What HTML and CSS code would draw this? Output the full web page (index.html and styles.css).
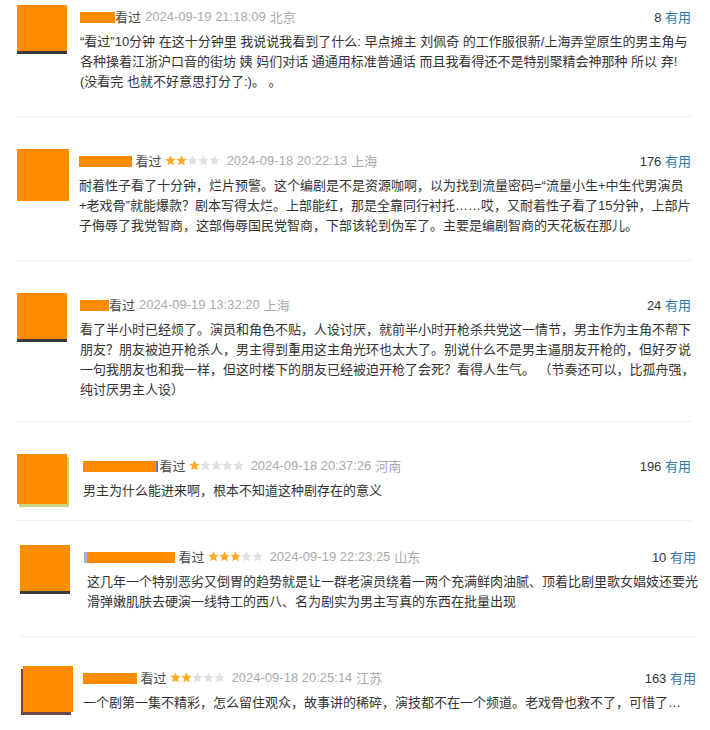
FILE: index.html
```html
<!DOCTYPE html>
<html lang="zh-CN">

<head>
  <meta charset="UTF-8">
  <meta name="viewport" content="width=device-width, initial-scale=1.0">
  <title>短评</title>
  <link rel="stylesheet" href="styles.css">
</head>

<body>
  <!-- star sprite -->
  <svg class="sprite" width="0" height="0">
    <defs>
      <polygon id="star" points="5.5,0.3 7.03,3.7 10.73,4.1 7.97,6.6 8.73,10.25 5.5,8.4 2.27,10.25 3.03,6.6 0.27,4.1 3.97,3.7" />
    </defs>
  </svg>

  <div class="comment-list">

    <div class="comment-item item-first">
      <div class="avatar avatar-dark"></div>
      <div class="comment">
        <h3 class="comment-info">
          <span class="user"><span class="mask" style="width:35px"></span>看过</span>
          <span class="comment-time">2024-09-19 21:18:09</span>
          <span class="comment-location">北京</span>
          <span class="votes"><span class="vote-count">8</span> <a href="#">有用</a></span>
        </h3>
        <p class="comment-content">“看过”10分钟 在这十分钟里 我说说我看到了什么: 早点摊主 刘佩奇 的工作服很新/上海弄堂原生的男主角与<br>各种操着江浙沪口音的街坊 姨 妈们对话 通通用标准普通话 而且我看得还不是特别聚精会神那种 所以 弃!<br>(没看完 也就不好意思打分了:)。 。</p>
      </div>
    </div>

    <div class="comment-item">
      <div class="avatar avatar-wide"></div>
      <div class="comment">
        <h3 class="comment-info">
          <span class="user"><span class="mask" style="width:53px"></span> 看过</span>
          <svg class="stars" width="55" height="11" viewBox="0 0 55 11">
            <use href="#star" class="on" x="0" /><use href="#star" class="on" x="11" /><use href="#star" x="22" /><use href="#star" x="33" /><use href="#star" x="44" />
          </svg>
          <span class="comment-time">2024-09-18 20:22:13</span>
          <span class="comment-location">上海</span>
          <span class="votes"><span class="vote-count">176</span> <a href="#">有用</a></span>
        </h3>
        <p class="comment-content">耐着性子看了十分钟，烂片预警。这个编剧是不是资源咖啊，以为找到流量密码=“流量小生+中生代男演员<br>+老戏骨”就能爆款？剧本写得太烂。上部能红，那是全靠同行衬托……哎，又耐着性子看了15分钟，上部片<br>子侮辱了我党智商，这部侮辱国民党智商，下部该轮到伪军了。主要是编剧智商的天花板在那儿。</p>
      </div>
    </div>

    <div class="comment-item item-tall">
      <div class="avatar avatar-dark"></div>
      <div class="comment">
        <h3 class="comment-info">
          <span class="user"><span class="mask" style="width:29px"></span>看过</span>
          <span class="comment-time">2024-09-19 13:32:20</span>
          <span class="comment-location">上海</span>
          <span class="votes"><span class="vote-count">24</span> <a href="#">有用</a></span>
        </h3>
        <p class="comment-content">看了半小时已经烦了。演员和角色不贴，人设讨厌，就前半小时开枪杀共党这一情节，男主作为主角不帮下<br>朋友？朋友被迫开枪杀人，男主得到重用这主角光环也太大了。别说什么不是男主逼朋友开枪的，但好歹说<br>一句我朋友也和我一样，但这时楼下的朋友已经被迫开枪了会死？看得人生气。 （节奏还可以，比孤舟强，<br>纯讨厌男主人设）</p>
      </div>
    </div>

    <div class="comment-item item-short">
      <div class="avatar avatar-green"></div>
      <div class="comment">
        <h3 class="comment-info">
          <span class="user"><span class="mask mask-tail" style="width:73px"></span> 看过</span>
          <svg class="stars" width="55" height="11" viewBox="0 0 55 11">
            <use href="#star" class="on" x="0" /><use href="#star" x="11" /><use href="#star" x="22" /><use href="#star" x="33" /><use href="#star" x="44" />
          </svg>
          <span class="comment-time">2024-09-18 20:37:26</span>
          <span class="comment-location">河南</span>
          <span class="votes"><span class="vote-count">196</span> <a href="#">有用</a></span>
        </h3>
        <p class="comment-content">男主为什么能进来啊，根本不知道这种剧存在的意义</p>
      </div>
    </div>

    <div class="comment-item item-inset">
      <div class="avatar avatar-dark"></div>
      <div class="comment">
        <h3 class="comment-info">
          <span class="user"><span class="mask mask-head" style="width:88px"></span> 看过</span>
          <svg class="stars" width="55" height="11" viewBox="0 0 55 11">
            <use href="#star" class="on" x="0" /><use href="#star" class="on" x="11" /><use href="#star" class="on" x="22" /><use href="#star" x="33" /><use href="#star" x="44" />
          </svg>
          <span class="comment-time">2024-09-19 22:23:25</span>
          <span class="comment-location">山东</span>
          <span class="votes"><span class="vote-count">10</span> <a href="#">有用</a></span>
        </h3>
        <p class="comment-content">这几年一个特别恶劣又倒胃的趋势就是让一群老演员绕着一两个充满鲜肉油腻、顶着比剧里歌女娼妓还要光<br>滑弹嫩肌肤去硬演一线特工的西八、名为剧实为男主写真的东西在批量出现</p>
      </div>
    </div>

    <div class="comment-item item-inset item-last">
      <div class="avatar avatar-photo"></div>
      <div class="comment">
        <h3 class="comment-info">
          <span class="user"><span class="mask" style="width:54px"></span> 看过</span>
          <svg class="stars" width="55" height="11" viewBox="0 0 55 11">
            <use href="#star" class="on" x="0" /><use href="#star" class="on" x="11" /><use href="#star" x="22" /><use href="#star" x="33" /><use href="#star" x="44" />
          </svg>
          <span class="comment-time">2024-09-18 20:25:14</span>
          <span class="comment-location">江苏</span>
          <span class="votes"><span class="vote-count">163</span> <a href="#">有用</a></span>
        </h3>
        <p class="comment-content">一个剧第一集不精彩，怎么留住观众，故事讲的稀碎，演技都不在一个频道。老戏骨也救不了，可惜了…</p>
      </div>
    </div>

  </div>
</body>

</html>
```

FILE: styles.css
```css
/* Base styles */
body {
  margin: 0;
  background: #fff;
  color: #333;
  font-family: "Liberation Sans", Arial, "Noto Sans CJK SC", sans-serif;
  font-size: 13px;
  overflow: hidden;
}

.sprite {
  position: absolute;
  width: 0;
  height: 0;
}

.comment-item {
  display: flex;
  align-items: flex-start;
  margin: 0 19px 0 17px;
  padding: 32px 0 24px;
  border-bottom: 1px solid #eee;
}

.item-first {
  padding-top: 5px;
}

.item-tall {
  padding-bottom: 21px;
}

.item-short {
  padding-bottom: 16px;
}

.item-inset {
  margin: 0 14px 0 20px;
  padding-top: 24px;
}

.item-last {
  padding-top: 29px;
  border-bottom: none;
}

/* Avatars (masked) */
.avatar {
  flex-shrink: 0;
  width: 50px;
  height: 46px;
  margin-right: 13px;
  background: #ff8c00;
}

.avatar-dark {
  box-shadow: 0 3px 0 #3a3a3a;
}

.avatar-wide {
  width: 52px;
  height: 52px;
  margin-right: 10px;
}

.avatar-green {
  height: 50px;
  margin-right: 16px;
  box-shadow: 2px 3px 0 #cbd37e;
}

.item-inset .avatar {
  margin-right: 17px;
}

.item-last .avatar {
  margin-left: 3px;
  margin-right: 10px;
  box-shadow: -2px 3px 0 #6b4a44;
}

.comment {
  flex: 1;
  min-width: 0;
}

/* Header row */
.comment-info {
  display: flex;
  align-items: center;
  margin: 1px 0 0;
  height: 20px;
  font-size: 13px;
  font-weight: normal;
  white-space: nowrap;
}

.user {
  color: #494949;
}

.mask {
  display: inline-block;
  height: 11px;
  vertical-align: -1px;
  background: #ff8c00;
}

.mask-tail {
  box-shadow: 2px 0 0 #5b7fb5;
}

.mask-head {
  box-shadow: -3px 0 0 #9fb4d4;
}

.stars {
  margin: 0 7px 0 3px;
}

.stars use {
  fill: #e0e0e0;
}

.stars use.on {
  fill: #ffac2d;
}

.comment-time {
  margin-left: 4px;
  color: #aaa;
}

.stars + .comment-time {
  margin-left: 0;
}

.comment-location {
  margin-left: 4px;
  color: #aaa;
}

.votes {
  margin-left: auto;
  color: #333;
}

.votes a {
  color: #37a;
  text-decoration: none;
}

/* Body text */
.comment-content {
  margin: 6px 0 0;
  font-size: 13px;
  line-height: 20px;
  white-space: nowrap;
  color: #333;
}
```
